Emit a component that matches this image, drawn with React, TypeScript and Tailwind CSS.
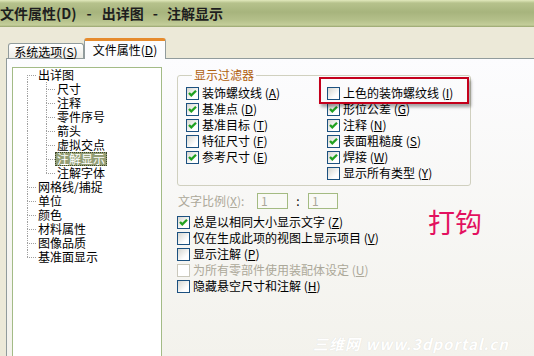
import type { ReactNode } from 'react';

const FONT = '"Noto Sans CJK SC", "Liberation Sans", sans-serif';

type TreeRow = { label: string; level: 0 | 1; first?: boolean; last?: boolean; selected?: boolean };

const TREE: TreeRow[] = [
  { label: '出详图', level: 0, first: true },
  { label: '尺寸', level: 1, first: true },
  { label: '注释', level: 1 },
  { label: '零件序号', level: 1 },
  { label: '箭头', level: 1 },
  { label: '虚拟交点', level: 1 },
  { label: '注解显示', level: 1, selected: true },
  { label: '注解字体', level: 1, last: true },
  { label: '网格线/捕捉', level: 0 },
  { label: '单位', level: 0 },
  { label: '颜色', level: 0 },
  { label: '材料属性', level: 0 },
  { label: '图像品质', level: 0 },
  { label: '基准面显示', level: 0, last: true },
];

type Opt = { label: string; key: string; checked?: boolean; disabled?: boolean };

const COL1: Opt[] = [
  { label: '装饰螺纹线', key: 'A', checked: true },
  { label: '基准点', key: 'D', checked: true },
  { label: '基准目标', key: 'T', checked: true },
  { label: '特征尺寸', key: 'F' },
  { label: '参考尺寸', key: 'E', checked: true },
];

const COL2: Opt[] = [
  { label: '上色的装饰螺纹线', key: 'I' },
  { label: '形位公差', key: 'G', checked: true },
  { label: '注释', key: 'N', checked: true },
  { label: '表面粗糙度', key: 'S', checked: true },
  { label: '焊接', key: 'W', checked: true },
  { label: '显示所有类型', key: 'Y' },
];

const BELOW: Opt[] = [
  { label: '总是以相同大小显示文字', key: 'Z', checked: true },
  { label: '仅在生成此项的视图上显示项目', key: 'V' },
  { label: '显示注解', key: 'P' },
  { label: '为所有零部件使用装配体设定', key: 'U', disabled: true },
  { label: '隐藏悬空尺寸和注解', key: 'H' },
];

// dotted connector cell for the tree
function Branch({ width, top, bottom, arm }: { width: string; top: boolean; bottom: boolean; arm: boolean }) {
  return (
    <div className={`relative h-full shrink-0 ${width}`}>
      {top && <span className="absolute left-0 top-0 h-[7px] border-l border-dotted border-[#a0a0a0]" />}
      {bottom && <span className="absolute left-0 top-[7px] h-[7px] border-l border-dotted border-[#a0a0a0]" />}
      {arm && <span className="absolute left-0 top-[7px] w-[9px] border-t border-dotted border-[#a0a0a0]" />}
    </div>
  );
}

function Tree() {
  return (
    <div className="ml-[5px] mt-[8px] h-[300px] w-[150px] shrink-0 border border-[#a3bb86] bg-white">
      {TREE.map((r) => (
        <div key={r.label} className="flex h-[14px] items-stretch">
          <div className="w-[14px] shrink-0" />
          {r.level === 0 ? (
            <Branch width="w-[9px]" top={!r.first} bottom={!r.last} arm />
          ) : (
            <>
              <Branch width="w-[19px]" top bottom arm={false} />
              <Branch width="w-[9px]" top bottom={!r.last} arm />
            </>
          )}
          <span
            className={`px-[2px] text-[12px] leading-[14px] ${
              r.selected ? 'bg-[#939e75] text-white outline outline-1 outline-dotted outline-[#3d4526] -outline-offset-1' : 'text-black'
            }`}
          >
            {r.label}
          </span>
        </div>
      ))}
    </div>
  );
}

function Box({ checked, disabled }: { checked?: boolean; disabled?: boolean }) {
  return (
    <span
      className={`flex h-[13px] w-[13px] shrink-0 items-center justify-center border ${
        disabled ? 'border-[#cac8bb] bg-white' : 'border-[#1c5180] bg-[linear-gradient(135deg,#d6d6d0,#ffffff_70%)]'
      }`}
    >
      {checked && (
        <svg width="11" height="11" viewBox="0 0 11 11">
          <polyline points="2,5 4.3,7.4 9,2.7" fill="none" stroke="#21a121" strokeWidth="2.3" />
        </svg>
      )}
    </span>
  );
}

function Check({ o }: { o: Opt }) {
  return (
    <div className="flex h-[16px] items-center gap-[3px]">
      <Box checked={o.checked} disabled={o.disabled} />
      <span className={`whitespace-nowrap text-[12px] leading-[14px] ${o.disabled ? 'text-[#aca899]' : 'text-black'}`}>
        {o.label} (<u>{o.key}</u>)
      </span>
    </div>
  );
}

function Tab({ active, children }: { active?: boolean; children: ReactNode }) {
  if (active)
    return (
      <div className="relative z-10 -mb-px flex h-[21px] w-[82px] items-center justify-center rounded-t-[3px] border-x border-t-[3px] border-x-[#919b9c] border-t-[#e68b2c] bg-[#fcfcfe] text-[12px] text-black">
        {children}
      </div>
    );
  return (
    <div className="flex h-[15px] w-[76px] items-center justify-center rounded-t-[3px] border-x border-t border-[#919b9c] bg-[linear-gradient(to_bottom,#ffffff,#ecebe5)] pt-px text-[12px] text-black">
      {children}
    </div>
  );
}

export default function App() {
  return (
    <div className="relative h-[356px] w-[534px] overflow-hidden bg-[#ece9d8]" style={{ fontFamily: FONT }}>
      {/* title bar */}
      <div className="flex h-[27px] items-center whitespace-nowrap bg-[linear-gradient(to_bottom,#e2e9bd_0px,#b6c28c_3px,#a7b47d_12px,#b4c08a_20px,#c4ce9a_25px,#97a46d_27px)] text-[14px] font-bold text-[#1e1e1e]">
        <span>文件属性(D)</span>
        <span className="mx-[10px]">-</span>
        <span>出详图</span>
        <span className="mx-[9px]">-</span>
        <span>注解显示</span>
      </div>

      {/* tabs */}
      <div className="flex h-[31px] items-end pl-[8px]">
        <Tab>
          系统选项(<u>S</u>)
        </Tab>
        <Tab active>
          文件属性(<u>D</u>)
        </Tab>
      </div>

      {/* page */}
      <div className="ml-[6px] flex h-[300px] border-l border-t border-[#919b9c] bg-[linear-gradient(to_bottom,#fcfcfe,#f3f2ec)]">
        <Tree />

        <div className="ml-[15px] mt-[9px] flex flex-col">
          <fieldset className="h-[118px] w-[294px] rounded-[3px] border border-[#d0d0bf] pl-[8px]">
            <legend className="ml-[6px] px-[2px] text-[12px] leading-[14px] text-[#b0600f]">显示过滤器</legend>
            <div className="mt-[3px] flex">
              <div className="w-[141px]">
                {COL1.map((o) => (
                  <Check key={o.key} o={o} />
                ))}
              </div>
              <div>
                {COL2.map((o) => (
                  <Check key={o.key} o={o} />
                ))}
              </div>
            </div>
          </fieldset>

          <div className="mt-[7px] flex h-[16px] items-center text-[12px] leading-[14px] text-[#aca899]">
            <span className="w-[80px] pl-[1px]">
              文字比例(<u>X</u>):
            </span>
            <span className="flex h-[16px] w-[31px] items-center border border-[#a4bb82] bg-[#f9f9f6] pl-[3px]">1</span>
            <span className="w-[20px] text-center text-black">:</span>
            <span className="flex h-[16px] w-[30px] items-center border border-[#a4bb82] bg-[#f9f9f6] pl-[3px]">1</span>
          </div>

          <div className="mt-[5px] flex flex-col">
            {BELOW.map((o) => (
              <Check key={o.key} o={o} />
            ))}
          </div>
        </div>
      </div>

      {/* annotation overlays */}
      <div className="absolute left-[319px] top-[77px] h-[27px] w-[150px] border-2 border-[#c4001c] shadow-[2px_3px_3px_rgba(0,0,0,0.35)]" />
      <div className="absolute left-[428px] top-[207px] text-[27px] leading-[30px] text-[#e3105f]">打钩</div>
      <div className="absolute left-[313px] top-[333px] whitespace-nowrap text-[15px] font-bold italic tracking-[1px] text-white [text-shadow:0_0_1px_rgba(0,0,0,0.12)]">
        三维网 www.3dportal.cn
      </div>
    </div>
  );
}
